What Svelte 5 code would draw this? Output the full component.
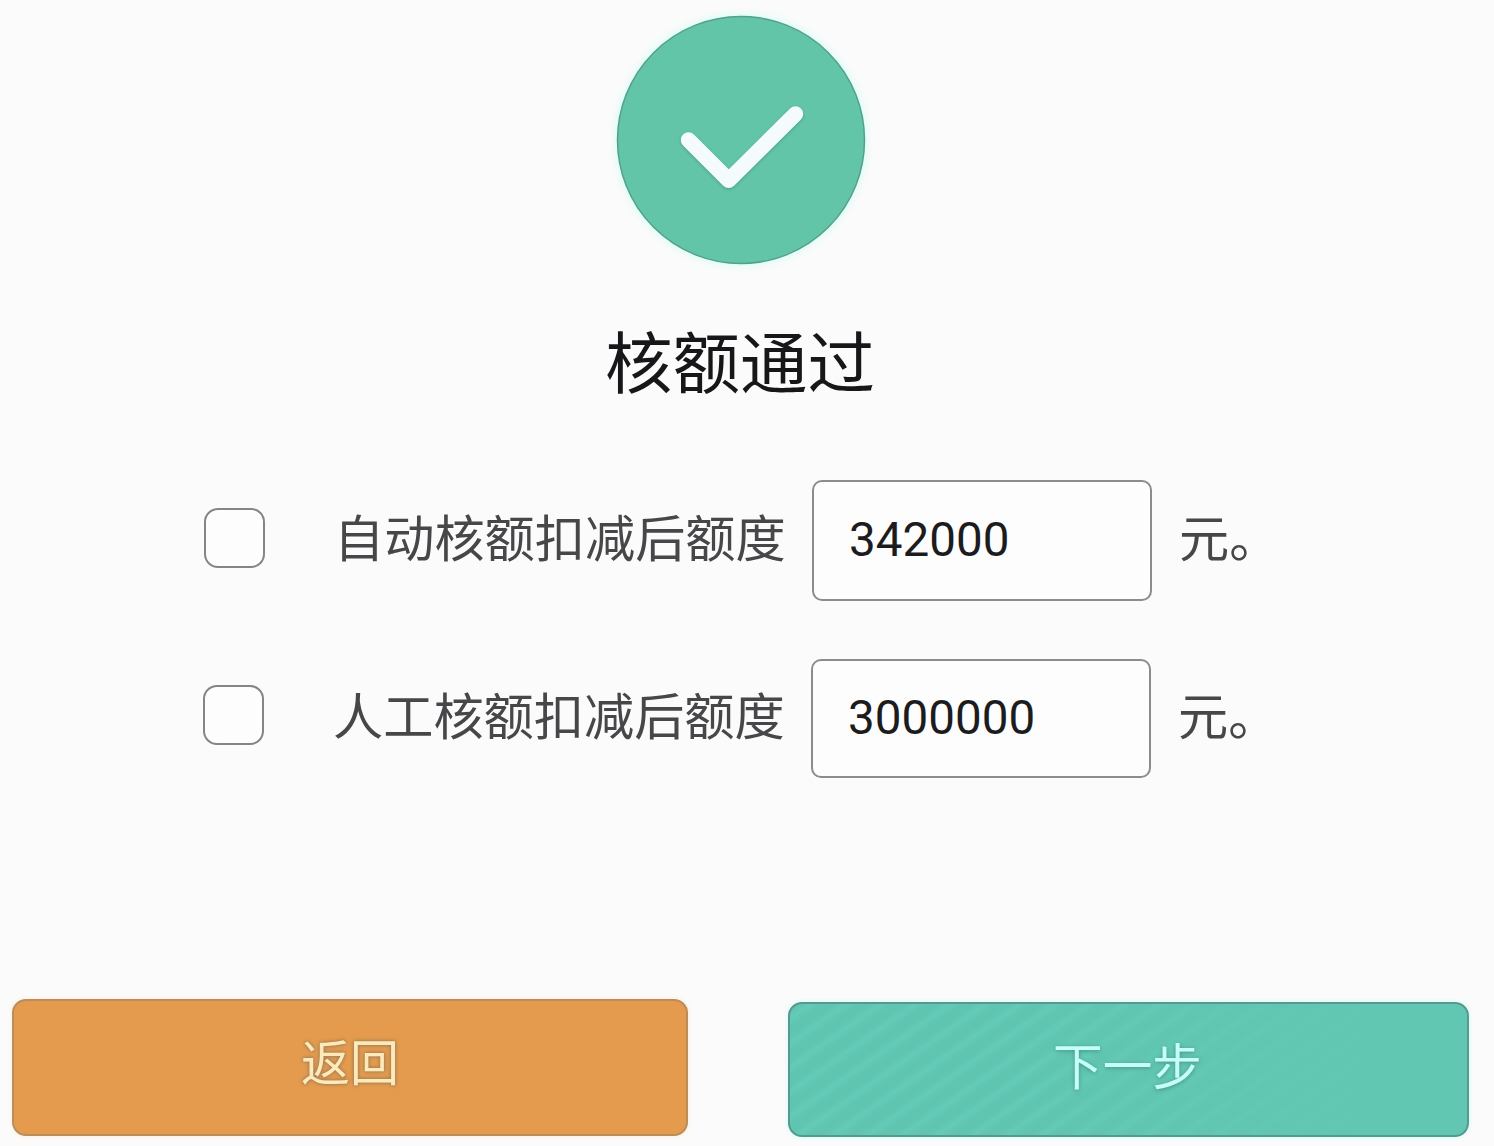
<script>
  let rows = $state([
    { id: 'auto', label: '自动核额扣减后额度', amount: '342000', checked: false },
    { id: 'manual', label: '人工核额扣减后额度', amount: '3000000', checked: false }
  ]);
</script>

<main class="page">
  <section class="result">
    <svg class="badge" viewBox="0 0 264 264" aria-hidden="true">
      <circle class="disc" cx="132" cy="132" r="123.5" />
      <path class="tick" d="M79.5 132 L119.7 172.2 L186.5 106" />
    </svg>
    <h1>核额通过</h1>
  </section>

  <form class="quotas">
    {#each rows as row (row.id)}
      <div class="row {row.id}">
        <input class="box" type="checkbox" id={row.id} bind:checked={row.checked} />
        <label for={row.id}>{row.label}</label>
        <input class="amount" type="text" aria-label={row.label} bind:value={row.amount} />
        <span class="unit">元。</span>
      </div>
    {/each}
  </form>

  <footer class="actions">
    <button class="back" type="button">返回</button>
    <button class="next" type="button">下一步</button>
  </footer>
</main>

<style>
  :global(body) {
    margin: 0;
    background: #fbfbfb;
  }

  .page {
    box-sizing: border-box;
    width: 1494px;
    height: 1146px;
    display: flex;
    flex-direction: column;
    overflow: hidden;
    background: #fbfbfb;
    font-family: Roboto, 'Noto Sans CJK SC', sans-serif;
  }

  .result {
    display: flex;
    flex-direction: column;
    align-items: center;
    width: 1482px;
    padding-top: 8px;
  }

  .badge {
    width: 264px;
    height: 264px;
    filter: drop-shadow(0 0 4px #c4fff2);
  }

  .disc {
    fill: #62c5a8;
    stroke: #55a08a;
    stroke-width: 1.5;
  }

  .tick {
    fill: none;
    stroke: #f4fbfc;
    stroke-width: 15.5;
    stroke-linecap: round;
    stroke-linejoin: round;
    filter: drop-shadow(0 1px 1.5px #4b9c86);
  }

  h1 {
    margin: 44px 2px 0 0;
    height: 98px;
    font-size: 67.5px;
    line-height: 98px;
    font-weight: 400;
    color: #17171a;
  }

  .quotas {
    display: flex;
    flex-direction: column;
    gap: 58px;
    padding: 66px 0 0 204px;
  }

  .row {
    display: flex;
    align-items: center;
    height: 121px;
  }

  .row.manual {
    height: 119px;
    margin-left: -1px;
  }

  .box {
    appearance: none;
    box-sizing: border-box;
    flex: none;
    width: 61px;
    height: 60px;
    margin: 0 69px 5px 0;
    border: 2px solid #858585;
    border-radius: 14px;
    background: #fdfdfd;
  }

  .manual .box {
    margin-bottom: 7px;
  }

  .box:checked {
    background: #62c5a8;
  }

  label {
    flex: none;
    width: 452px;
    font-size: 50.2px;
    line-height: 74px;
    padding-bottom: 2px;
    white-space: nowrap;
    color: #47474a;
  }

  .amount {
    box-sizing: border-box;
    flex: none;
    width: 340px;
    height: 100%;
    margin: 0 0 0 26px;
    padding: 0 34px 1px 35px;
    border: 2px solid #8c8c8c;
    border-radius: 10px;
    background: #fdfdfd;
    color: #1c1c1e;
    font-family: Roboto, sans-serif;
    font-size: 47.6px;
    outline: none;
  }

  .unit {
    margin-left: 27px;
    padding-bottom: 2px;
    font-size: 50.2px;
    line-height: 74px;
    color: #47474a;
  }

  .actions {
    display: flex;
    align-items: flex-start;
    gap: 100px;
    margin-top: auto;
    padding: 0 0 9px 12px;
  }

  button {
    box-sizing: border-box;
    padding: 0 0 15px;
    border-radius: 14px;
    font-family: 'Noto Sans CJK SC', sans-serif;
    font-size: 49px;
    font-weight: 400;
    line-height: 72px;
  }

  .back {
    width: 676px;
    height: 137px;
    border: 2px solid #b98d5c;
    background: #e59b4d;
    color: #ffe9b8;
    text-shadow: 0 0 4px #957a58, 0 0 3px #a8865c;
    box-shadow: 0 0 5px #ffe9d6;
  }

  .next {
    width: 681px;
    height: 135px;
    margin-top: 3px;
    padding: 0 2px 13px 0;
    border: 2px solid #57998c;
    background:
      linear-gradient(90deg, transparent 35%, #61c7b3 85%),
      repeating-linear-gradient(145deg, #5fc4b0 0 5px, #63cbb8 12px, #5fc4b0 20px);
    color: #c5fffa;
    font-size: 49.6px;
    text-shadow: 0 1px 4px #4c9286;
    box-shadow: 0 0 5px #c9fff6;
  }
</style>
